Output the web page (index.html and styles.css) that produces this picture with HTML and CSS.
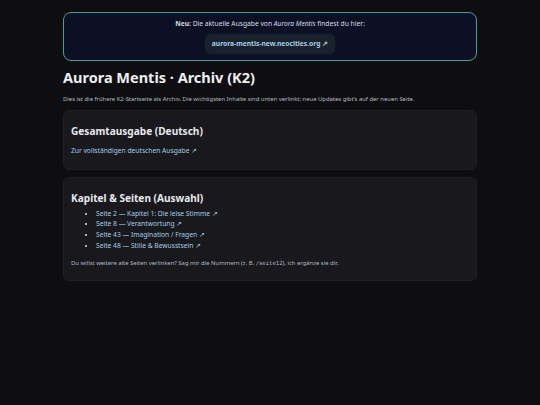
FILE: index.html
```html
<html>
	<head>
		<title>Aurora Mentis · Archiv (K2)</title>
		<meta name="viewport" content="width=device-width, initial-scale=1">
		<link rel="stylesheet" href="styles.css">
	</head>
	<body>
		<div class="wrap">
			<div class="notice">
				<p class="notice-text"><strong>Neu:</strong> Die aktuelle Ausgabe von <em>Aurora Mentis</em> findest du hier:</p>
				<a class="pill" href="#">aurora-mentis-new.neocities.org ↗</a>
			</div>
			<h1>Aurora Mentis · Archiv (K2)</h1>
			<p class="lead">Dies ist die frühere K2-Startseite als Archiv. Die wichtigsten Inhalte sind unten verlinkt; neue Updates gibt’s auf der neuen Seite.</p>
			<div class="card">
				<h2>Gesamtausgabe (Deutsch)</h2>
				<p class="card-link"><a href="#">Zur vollständigen deutschen Ausgabe ↗</a></p>
			</div>
			<div class="card">
				<h2>Kapitel &amp; Seiten (Auswahl)</h2>
				<ul class="pages">
					<li><a href="#">Seite 2 — Kapitel 1: Die leise Stimme ↗</a></li>
					<li><a href="#">Seite 8 — Verantwortung ↗</a></li>
					<li><a href="#">Seite 43 — Imagination / Fragen ↗</a></li>
					<li><a href="#">Seite 48 — Stille &amp; Bewusstsein ↗</a></li>
				</ul>
				<p class="small">Du willst weitere alte Seiten verlinken? Sag mir die Nummern (z. B. <code>/seite12</code>), ich ergänze sie dir.</p>
			</div>
		</div>
	</body>
</html>
```

FILE: styles.css
```css
*{
	box-sizing: border-box;
}
body{
	margin: 0;
	padding: 0;
	background-color: #0e0e10;
	color: #e6e6ea;
	font-family: "Noto Sans", sans-serif;
	font-size: 6.7px;
}
a{
	color: #a6cde8;
	text-decoration: none;
}
.wrap{
	width: 414px;
	margin: 0 auto;
	padding: 12px 0;
}
.notice{
	display: flex;
	flex-direction: column;
	align-items: center;
	gap: 5px;
	padding: 6px 8px;
	background-color: #0b1024;
	border: 1px solid #4a9a98;
	border-radius: 8px;
}
.notice-text{
	margin: 0;
	line-height: 10px;
	color: #d8dbe4;
}
.pill{
	display: inline-block;
	padding: 5px 7px;
	line-height: 10px;
	background-color: #19212d;
	border-radius: 5px;
	font-weight: bold;
}
h1{
	margin: 6px 0 0;
	font-size: 14.5px;
	line-height: 20px;
	color: #eef0f4;
}
.lead{
	margin: 8px 0 0;
	font-size: 5.9px;
	line-height: 8px;
	color: #b8bac2;
}
.card{
	margin-top: 7px;
	padding: 13px 7px;
	background-color: #18181d;
	border: 1px solid #1f1f25;
	border-radius: 6px;
}
h2{
	margin: 0;
	font-size: 10.1px;
	line-height: 14px;
	color: #e8e9ee;
}
.card-link{
	margin: 8px 0 0;
	line-height: 10px;
}
.pages{
	margin: 3.6px 0 0;
	padding-left: 25px;
	line-height: 10.7px;
}
.small{
	margin: 7.6px 0 0;
	font-size: 5.9px;
	line-height: 8px;
	color: #b8bac2;
}
code{
	font-family: "DejaVu Sans Mono", monospace;
	font-size: 5.6px;
}
```
